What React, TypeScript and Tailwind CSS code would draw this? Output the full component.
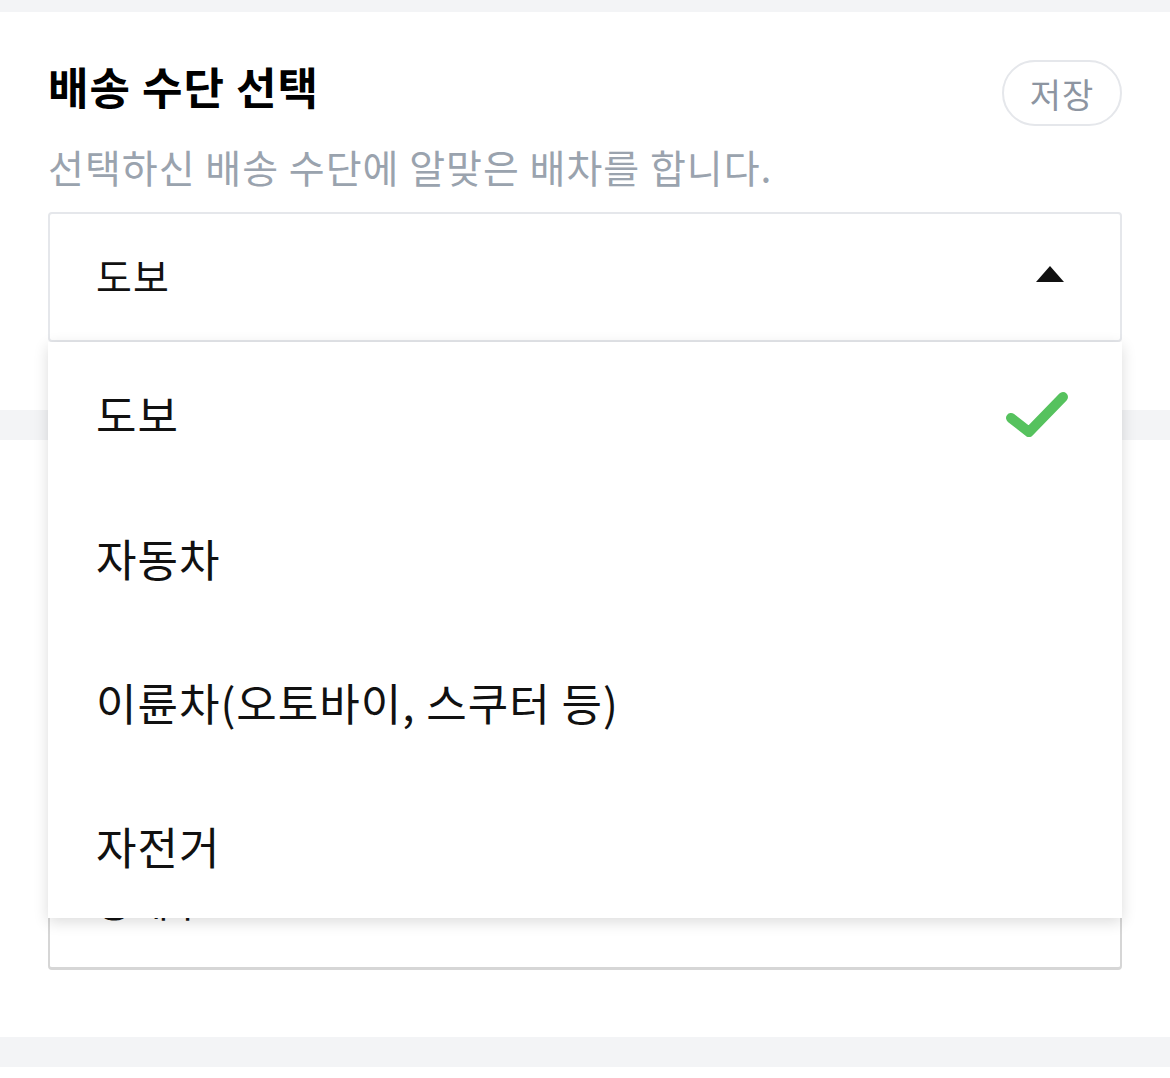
const FONT = { fontFamily: '"Noto Sans CJK KR", "Noto Sans", sans-serif' };

const options = ["도보", "자동차", "이륜차(오토바이, 스쿠터 등)", "자전거"];

function Check() {
  return (
    <svg width="62" height="46" viewBox="0 0 62 46" fill="none">
      <path
        d="M5 27 L23 41 L57 6"
        stroke="#56c25e"
        strokeWidth="10"
        strokeLinecap="round"
        strokeLinejoin="round"
      />
    </svg>
  );
}

export default function App() {
  const selected = "도보";

  return (
    <div className="min-h-[1078px] bg-[#f3f4f6] pt-[12px]" style={FONT}>
      <section className="bg-white px-12 pt-[44px] pb-[68px]">
        <div className="flex justify-between items-start">
          <h2 className="text-[44px] leading-[60px] font-bold tracking-[1px] text-black">배송 수단 선택</h2>
          <button className="mt-[4px] h-[66px] w-[120px] rounded-full border-2 border-[#e5e7eb] text-[34px] tracking-[1px] text-[#8d95a1]">
            저장
          </button>
        </div>
        <p className="mt-[13px] text-[39px] leading-[54px] tracking-[1px] text-[#9aa3ae]">
          선택하신 배송 수단에 알맞은 배차를 합니다.
        </p>
        <div className="relative mt-[19px]">
          <div className="flex items-center justify-between h-[130px] rounded border-2 border-[#e5e7eb] pl-[46px] pr-[56px]">
            <span className="text-[39px] tracking-[1px] text-[#111] -mt-[4px]">{selected}</span>
            <svg width="28" height="16" viewBox="0 0 28 16" className="-mt-[6px]">
              <path d="M14 0 L28 16 L0 16 Z" fill="#111" />
            </svg>
          </div>
          <ul className="absolute left-0 right-0 top-full z-10 bg-white shadow-[0_4px_14px_rgba(0,0,0,0.14)]">
            {options.map((o) => (
              <li key={o} className="flex items-center justify-between h-[144px] pl-12 pr-[54px]">
                <span className="text-[44px] leading-[60px] tracking-[1px] text-[#111]">{o}</span>
                {o === selected && <Check />}
              </li>
            ))}
          </ul>
        </div>
      </section>

      <section className="bg-white mt-[30px] px-12 pt-[48px] pb-[67px]">
        <h2 className="text-[44px] leading-[60px] font-bold tracking-[1px] text-black">배송지 정보</h2>
        <p className="mt-[13px] text-[39px] leading-[54px] tracking-[1px] text-[#9aa3ae]">
          정확한 주소를 입력해 주세요.
        </p>
        <div className="mt-[19px] flex items-center h-[130px] rounded border-2 border-[#e5e7eb] pl-[46px] text-[39px] text-[#111]">
          서울특별시 강남구
        </div>
        <div className="mt-[76px] flex items-start h-[130px] rounded border-2 border-b-[3px] border-[#d6d6d6] pl-[46px] pt-[40px] text-[39px] leading-[36px] tracking-[1px] text-[#111]">
          상세주소
        </div>
      </section>

      <div className="bg-white mt-[30px] h-[11px]" />
    </div>
  );
}
